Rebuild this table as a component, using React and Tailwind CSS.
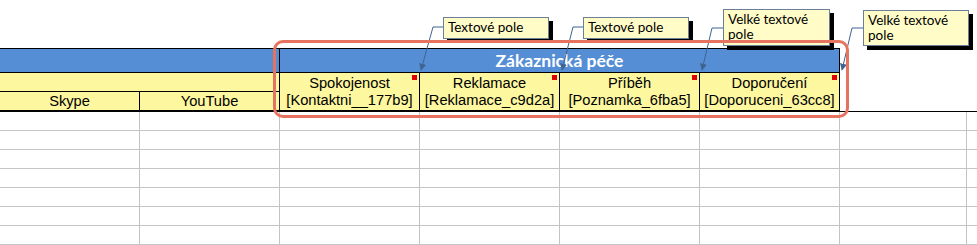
import React from "react";

const headerCells = [
  { title: "Spokojenost", field: "[Kontaktni__177b9]" },
  { title: "Reklamace", field: "[Reklamace_c9d2a]" },
  { title: "Příběh", field: "[Poznamka_6fba5]" },
  { title: "Doporučení", field: "[Doporuceni_63cc8]" },
];

const callouts = [
  { left: 443, top: 17, w: 106, h: 22, text: ["Textové pole"] },
  { left: 583, top: 17, w: 106, h: 22, text: ["Textové pole"] },
  { left: 723, top: 9, w: 107, h: 37, text: ["Velké textové", "pole"] },
  { left: 863, top: 10, w: 106, h: 36, text: ["Velké textové", "pole"] },
];

const leaders = [
  "M443 27 L433 27 L421 70",
  "M583 27 L573 27 L562 70",
  "M723 28 L712 28 L702 70",
  "M863 28 L852 28 L842 70",
];

function CommentMark() {
  return <span className="absolute top-[2px] right-[2px] w-[5px] h-[5px] bg-[#e00000]" />;
}

export default function App() {
  return (
    <div className="relative w-[977px] h-[245px] overflow-hidden bg-white font-['Liberation_Sans',Arial,sans-serif] text-[14.67px] text-black">
      <div className="h-[48px]" />

      {/* header band */}
      <div className="flex">
        <div className="w-[840px] shrink-0">
          <div className="flex h-[25px] border-y border-black bg-[#558ed5]">
            <div className="w-[280px] border-r border-black" />
            <div className="w-[560px] border-r border-black flex items-center justify-center font-['Lato',sans-serif] font-bold text-[17.5px] leading-none text-white">
              Zákaznická péče
            </div>
          </div>
          <div className="flex h-[39px] border-b-2 border-black bg-[#fdf7a0]">
            <div className="w-[280px] flex flex-col">
              <div className="h-[19px] border-r border-b border-black" />
              <div className="flex flex-1">
                <div className="w-[140px] border-r border-black flex items-center justify-center leading-none">Skype</div>
                <div className="w-[140px] border-r border-black flex items-center justify-center leading-none">YouTube</div>
              </div>
            </div>
            {headerCells.map((c) => (
              <div key={c.field} className="relative w-[140px] border-r border-black flex flex-col items-center justify-center leading-[17px] whitespace-nowrap">
                <span>{c.title}</span>
                <span>{c.field}</span>
                <CommentMark />
              </div>
            ))}
          </div>
        </div>
        <div className="flex-1 h-[64px] border-b border-black" />
      </div>

      {/* empty sheet rows */}
      <div className="flex flex-col">
        {Array.from({ length: 7 }).map((_, r) => (
          <div key={r} className="flex h-[19px] border-b border-[#c4c4c4]">
            {Array.from({ length: 6 }).map((__, c) => (
              <div key={c} className="w-[140px] border-r border-[#c4c4c4]" />
            ))}
            <div className="w-[127px] border-r border-[#c4c4c4]" />
          </div>
        ))}
      </div>

      {/* callout shapes */}
      {callouts.map((c, i) => (
        <div
          key={i}
          className="absolute bg-[#fffcc8] border border-[#6b7f9a] shadow-[4px_4px_0_#000] px-[4px] pt-[2px] font-['Lato',sans-serif] text-[13.5px] leading-[15px] text-black"
          style={{ left: c.left, top: c.top, width: c.w, height: c.h }}
        >
          {c.text.map((t) => (
            <div key={t}>{t}</div>
          ))}
        </div>
      ))}

      <svg className="absolute left-0 top-0 pointer-events-none" width="977" height="245" viewBox="0 0 977 245">
        <defs>
          <marker id="tip" viewBox="0 0 10 10" refX="9" refY="5" markerWidth="7" markerHeight="7" orient="auto" markerUnits="userSpaceOnUse">
            <path d="M0 0 L10 5 L0 10 Z" fill="#3f6490" />
          </marker>
        </defs>
        {leaders.map((d) => (
          <path key={d} d={d} fill="none" stroke="#3f6490" strokeWidth="1" markerEnd="url(#tip)" />
        ))}
      </svg>

      {/* highlight around the customer-care group */}
      <div className="absolute left-[273px] top-[40px] w-[576px] h-[78px] rounded-[10px] border-[3px] border-[#e6735f] pointer-events-none" />
    </div>
  );
}
